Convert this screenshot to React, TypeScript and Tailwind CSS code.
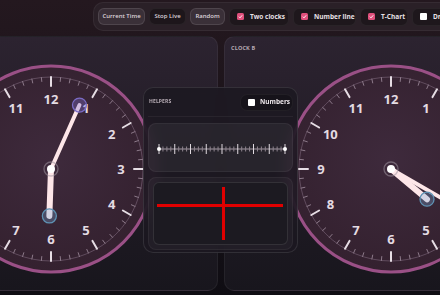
import React from "react"

const font = { fontFamily: '"Open Sans", "Noto Sans", sans-serif' }

type ClockProps = { hour: number; minute: number }

const Clock = ({ hour, minute }: ClockProps) => {
    const c = 106
    const ticks = Array.from({ length: 60 }, (_, i) => i)
    const nums = Array.from({ length: 12 }, (_, i) => i + 1)
    const pt = (deg: number, r: number) => {
        const a = (deg * Math.PI) / 180
        return [c + r * Math.sin(a), c - r * Math.cos(a)]
    }
    const hourDeg = (hour % 12) * 30 + minute * 0.5
    const minDeg = minute * 6
    const [hx, hy] = pt(hourDeg, 47)
    const [mx, my] = pt(minDeg, 70)
    return (
        <svg width="212" height="212" viewBox="0 0 212 212" className="shrink-0">
            <defs>
                <radialGradient id="face" cx="50%" cy="45%" r="55%">
                    <stop offset="0%" stopColor="#3e2a3c" />
                    <stop offset="100%" stopColor="#34212f" />
                </radialGradient>
            </defs>
            <circle cx={c} cy={c} r="103" fill="url(#face)" stroke="#9a5086" strokeWidth="3" />
            <circle cx={c} cy={c} r="92" fill="none" stroke="#6b5668" strokeWidth="0.8" />
            {ticks.map((i) => {
                const major = i % 5 === 0
                const [x1, y1] = pt(i * 6, 92)
                const [x2, y2] = pt(i * 6, major ? 83 : 88)
                return (
                    <line
                        key={i}
                        x1={x1}
                        y1={y1}
                        x2={x2}
                        y2={y2}
                        stroke={major ? "#e6dde4" : "#8d7a8a"}
                        strokeWidth={major ? 2 : 1}
                        strokeLinecap="round"
                    />
                )
            })}
            {nums.map((n) => {
                const [x, y] = pt(n * 30, 70)
                return (
                    <text
                        key={n}
                        x={x}
                        y={y}
                        textAnchor="middle"
                        dominantBaseline="central"
                        fill="#e4dbe2"
                        fontSize="13"
                        fontWeight="700"
                        style={font}
                    >
                        {n}
                    </text>
                )
            })}
            <line x1={c} y1={c} x2={hx} y2={hy} stroke="#fde6e8" strokeWidth="6" strokeLinecap="round" />
            <line x1={c} y1={c} x2={mx} y2={my} stroke="#fde6e8" strokeWidth="4" strokeLinecap="round" />
            <circle cx={hx} cy={hy} r="7" fill="rgba(120,170,215,0.3)" stroke="#5f92b4" strokeWidth="1.3" />
            <circle cx={mx} cy={my} r="7" fill="rgba(130,110,210,0.35)" stroke="#7b6cc6" strokeWidth="1.3" />
            <circle cx={c} cy={c} r="7" fill="none" stroke="rgba(160,150,160,0.55)" strokeWidth="1.3" />
            <circle cx={c} cy={c} r="4" fill="#ffffff" />
        </svg>
    )
}

const Check = ({ on }: { on: boolean }) =>
    on ? (
        <span className="w-[7px] h-[7px] rounded-[1.5px] bg-[#e0507c] flex items-center justify-center">
            <svg width="5" height="5" viewBox="0 0 6 6">
                <path d="M1 3.2 L2.4 4.6 L5 1.6" stroke="#fff" strokeWidth="1.1" fill="none" />
            </svg>
        </span>
    ) : (
        <span className="w-[7px] h-[7px] rounded-[1px] bg-white" />
    )

const NumberLine = () => {
    const x0 = 10
    const x1 = 136
    const subs = 32
    const step = (x1 - x0) / subs
    return (
        <svg width="147" height="49" viewBox="0 0 147 49">
            <line x1={x0} y1="25" x2={x1} y2="25" stroke="#a69ca6" strokeWidth="1" />
            {Array.from({ length: subs + 1 }, (_, i) => {
                const x = x0 + i * step
                const major = i % 4 === 0
                return (
                    <line
                        key={i}
                        x1={x}
                        y1={major ? 20 : 22.5}
                        x2={x}
                        y2={major ? 30 : 27.5}
                        stroke={major ? "#e0dae0" : "#8f858f"}
                        strokeWidth="1"
                    />
                )
            })}
            <circle cx={x0} cy="25" r="2" fill="#fff" />
            <circle cx={x1} cy="25" r="2" fill="#fff" />
        </svg>
    )
}

export default function App() {
    return (
        <div
            className="relative w-[440px] h-[295px] overflow-hidden bg-gradient-to-b from-[#24181f] to-[#0f0d13]"
            style={font}
        >
            <div className="flex pl-[93px] pt-[2px]">
                <div className="flex shrink-0 items-center gap-[4px] h-[29px] pl-[4px] pr-[8px] rounded-[10px] bg-[#2a2027] border border-white/5">
                    <button className="h-[17px] w-[47px] rounded-[6px] bg-[#3a3038] border border-white/10 text-[6px] font-semibold text-[#ddd4db] whitespace-nowrap">
                        Current Time
                    </button>
                    <button className="h-[17px] w-[37px] rounded-[6px] bg-[#1d161b] border border-white/5 text-[6px] font-semibold text-[#ddd4db] whitespace-nowrap">
                        Stop Live
                    </button>
                    <button className="h-[17px] w-[35px] rounded-[6px] bg-[#3a3038] border border-white/10 text-[6px] font-semibold text-[#ddd4db] whitespace-nowrap">
                        Random
                    </button>
                    {[
                        ["Two clocks", true, "w-[60px]"],
                        ["Number line", true, "w-[63px]"],
                        ["T-Chart", true, "w-[48px]"],
                        ["Draw", false, "w-[48px]"],
                    ].map(([label, on, w]) => (
                        <div
                            key={label as string}
                            className={`flex items-center gap-[6px] h-[18px] pl-[7px] rounded-[6px] bg-[#1e171c] border border-white/5 ${w}`}
                        >
                            <Check on={on as boolean} />
                            <span className="text-[6.5px] font-bold text-[#e8e0e6] whitespace-nowrap">{label as string}</span>
                        </div>
                    ))}
                </div>
            </div>

            <div className="flex gap-[6px] ml-[-116px] mt-[5px]">
                {["CLOCK A", "CLOCK B"].map((name, i) => (
                    <div
                        key={name}
                        className="flex flex-col items-center shrink-0 w-[334px] h-[255px] rounded-[10px] bg-gradient-to-b from-[#2c2330] to-[#18161d] border border-white/5"
                    >
                        <div className="self-start pl-[6px] pt-[7px] h-[18px] text-[5.5px] font-bold tracking-wide text-[#b7aab4]">
                            {name}
                        </div>
                        <div className="mt-[8px]">
                            {i === 0 ? <Clock hour={6} minute={4} /> : <Clock hour={4} minute={20} />}
                        </div>
                    </div>
                ))}
            </div>

            <div className="absolute left-[143px] top-[87px] w-[155px] h-[166px] rounded-[10px] bg-[#1c1820]/80 backdrop-blur-[6px] border border-white/10 flex flex-col px-[4px]">
                <div className="flex items-center justify-between h-[29px] border-b border-white/5 pl-[1px]">
                    <span className="text-[5px] font-bold tracking-wide text-[#b9aeb7]">HELPERS</span>
                    <div className="flex items-center gap-[5px] h-[17px] w-[53px] pl-[7px] rounded-[7px] bg-[#16131a] border border-white/5">
                        <Check on={false} />
                        <span className="text-[6.5px] font-bold text-[#ece6ea]">Numbers</span>
                    </div>
                </div>
                <div className="mt-[6px] h-[49px] rounded-[8px] bg-white/5 border border-white/5 overflow-hidden">
                    <NumberLine />
                </div>
                <div className="mt-[5px] h-[73px] rounded-[8px] bg-white/[0.03] border border-white/5 p-[4px]">
                    <div className="relative h-full rounded-[6px] border border-white/10 bg-[#1c1a21]">
                        <div className="absolute left-[3px] right-[4px] top-[21px] h-[3px] bg-[#e00000]" />
                        <div className="absolute left-[68px] top-[4px] bottom-[4px] w-[3px] bg-[#e00000]" />
                    </div>
                </div>
            </div>
        </div>
    )
}
